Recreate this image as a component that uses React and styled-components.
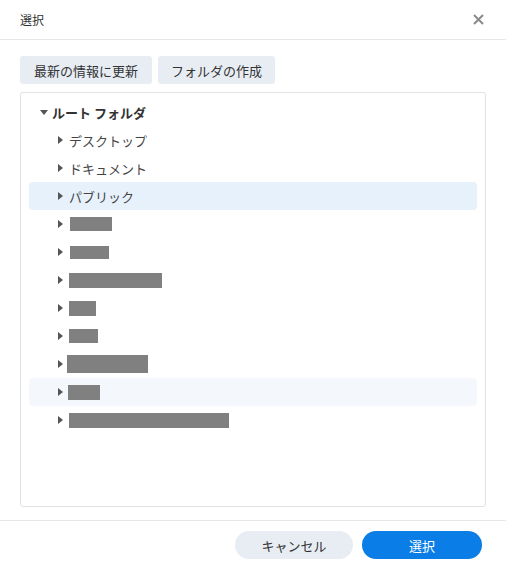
import React from 'react';
import styled, { createGlobalStyle } from 'styled-components';

const GlobalStyle = createGlobalStyle`
	html, body {
		margin: 0;
		padding: 0;
		background: #ffffff;
	}
	body {
		font-family: "Noto Sans CJK JP", "Noto Sans", sans-serif;
		color: #333;
	}
`;

const Dialog = styled.div`
	width: 506px;
	height: 570px;
	display: flex;
	flex-direction: column;
	background: #fff;
	box-sizing: border-box;
`;

const Header = styled.div`
	height: 39px;
	display: flex;
	align-items: center;
	justify-content: space-between;
	padding: 0 20px;
	border-bottom: 1px solid #e3e7ea;
	flex-shrink: 0;
`;

const Title = styled.div`
	font-size: 12px;
	color: #333;
	line-height: 1;
`;

const CloseButton = styled.button`
	border: 0;
	background: none;
	padding: 0;
	width: 14px;
	height: 14px;
	display: flex;
	align-items: center;
	justify-content: center;
	margin-right: 1px;
`;

const Body = styled.div`
	flex: 1;
	display: flex;
	flex-direction: column;
	padding: 16px 20px 13px 20px;
	gap: 8px;
`;

const Toolbar = styled.div`
	display: flex;
	gap: 6px;
`;

const ToolButton = styled.button`
	height: 28px;
	padding: 0 ${props => props.pad || 13}px;
	border: 0;
	border-radius: 3px;
	background: #e8edf3;
	color: #333;
	font-family: inherit;
	font-size: 13px;
`;

const TreePanel = styled.div`
	flex: 1;
	border: 1px solid #e0e3e6;
	border-radius: 3px;
	padding: 5px 8px 0 8px;
`;

const Row = styled.div`
	height: 28px;
	display: flex;
	align-items: center;
	padding-left: ${props => props.indent}px;
	border-radius: 4px;
	background: ${props => props.selected ? '#e6f1fc' : props.hover ? '#f4f8fc' : 'transparent'};
	font-size: 13px;
	color: ${props => props.root ? '#333' : '#444'};
	font-weight: ${props => props.root ? 700 : 400};
`;

const Caret = styled.span`
	width: ${props => props.w || 11}px;
	display: flex;
	align-items: center;
	flex-shrink: 0;
`;

const Redacted = styled.span`
	display: inline-block;
	height: ${props => props.h}px;
	width: ${props => props.w}px;
	margin-left: ${props => props.off}px;
	background: #808080;
`;

const Footer = styled.div`
	height: 48px;
	border-top: 1px solid #e3e7ea;
	display: flex;
	align-items: center;
	justify-content: flex-end;
	gap: 9px;
	padding: 0 24px 1px 0;
	flex-shrink: 0;
`;

const PillButton = styled.button`
	height: 28px;
	width: ${props => props.w}px;
	border: 0;
	border-radius: 14px;
	font-family: inherit;
	font-size: 13px;
	background: ${props => props.primary ? '#0a7ee6' : '#e8edf3'};
	color: ${props => props.primary ? '#fff' : '#333'};
`;

const CaretRight = () => (
	<svg width="5" height="8" viewBox="0 0 5 8">
		<path d="M0 0 L5 4 L0 8 Z" fill="#555" />
	</svg>
);

const CaretDown = () => (
	<svg width="8" height="5" viewBox="0 0 8 5">
		<path d="M0 0 L8 0 L4 5 Z" fill="#555" />
	</svg>
);

const hidden = [
	{ w: 42, h: 14, off: 1 },
	{ w: 39, h: 13, off: 1 },
	{ w: 93, h: 15, off: 0 },
	{ w: 27, h: 15, off: 0 },
	{ w: 29, h: 14, off: 0 },
	{ w: 81, h: 18, off: -2 },
	{ w: 32, h: 15, off: -1, hover: true },
	{ w: 160, h: 15, off: 0 },
];

const App = () => {
	return (
		<React.Fragment>
			<GlobalStyle />
			<Dialog>
				<Header>
					<Title>選択</Title>
					<CloseButton>
						<svg width="11" height="11" viewBox="0 0 11 11">
							<path d="M1 1 L10 10 M10 1 L1 10" stroke="#8a8a8a" strokeWidth="2" />
						</svg>
					</CloseButton>
				</Header>
				<Body>
					<Toolbar>
						<ToolButton pad={14}>最新の情報に更新</ToolButton>
						<ToolButton pad={13}>フォルダの作成</ToolButton>
					</Toolbar>
					<TreePanel>
						<Row root indent={11}>
							<Caret w={12}><CaretDown /></Caret>
							ルート フォルダ
						</Row>
						<Row indent={29}>
							<Caret><CaretRight /></Caret>
							デスクトップ
						</Row>
						<Row indent={29}>
							<Caret><CaretRight /></Caret>
							ドキュメント
						</Row>
						<Row indent={29} selected>
							<Caret><CaretRight /></Caret>
							パブリック
						</Row>
						{hidden.map((item, i) => (
							<Row key={i} indent={29} hover={item.hover}>
								<Caret><CaretRight /></Caret>
								<Redacted w={item.w} h={item.h} off={item.off} />
							</Row>
						))}
					</TreePanel>
				</Body>
				<Footer>
					<PillButton w={118}>キャンセル</PillButton>
					<PillButton primary w={120}>選択</PillButton>
				</Footer>
			</Dialog>
		</React.Fragment>
	);
};

export default App;
